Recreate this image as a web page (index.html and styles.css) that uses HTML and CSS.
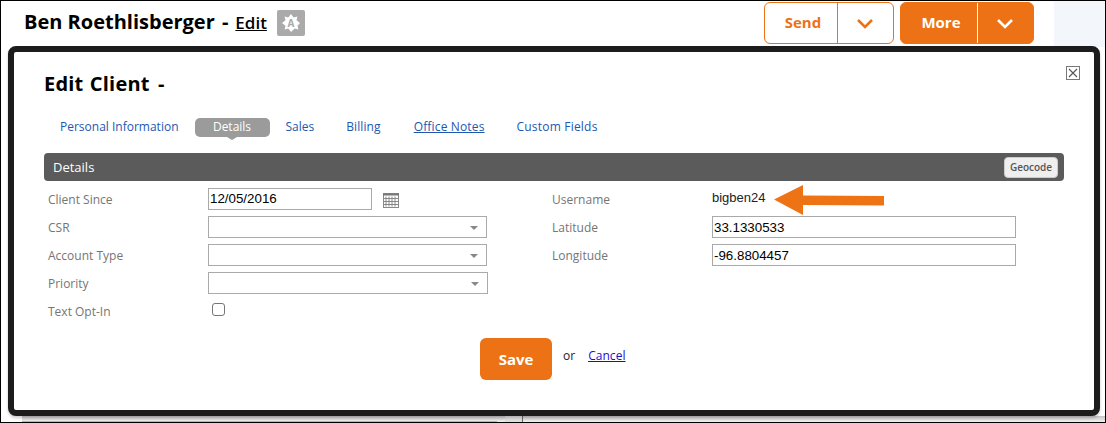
FILE: index.html
```html
<!DOCTYPE html>
<html lang="en">
<head>
<meta charset="utf-8">
<title>Edit Client</title>
<link rel="stylesheet" href="styles.css">
</head>
<body>
<div class="frame">
  <div class="under">
    <header class="top">
      <h1 class="name">Ben Roethlisberger <span class="dash">-</span></h1>
      <a class="edit" href="#">Edit</a>
      <span class="badge">
        <svg width="28" height="26" viewBox="0 0 28 26"><path d="M23 13l-2.500 2.700.9 3.700-3.700-.9L14 22l-2.700-3.500-3.700.9.9-3.700L5 13l3.500-2.700-.9-3.700 3.700.9L14 4l2.700 3.500 3.700-.9-.9 3.700z" fill="#fff"/><text x="14" y="17" class="badge-a">A</text></svg>
      </span>
      <div class="actions">
        <div class="split split-outline">
          <span class="split-label">Send</span>
          <span class="split-arrow"><svg width="18" height="11" viewBox="0 0 18 11"><path d="M2 2l7 7 7-7" class="chev"/></svg></span>
        </div>
        <div class="split split-solid">
          <span class="split-label">More</span>
          <span class="split-arrow"><svg width="18" height="11" viewBox="0 0 18 11"><path d="M2 2l7 7 7-7" class="chev"/></svg></span>
        </div>
      </div>
      <div class="side"></div>
    </header>
    <div class="strip">
      <span class="strip-a"></span>
      <span class="strip-b"></span>
      <span class="strip-c"></span>
    </div>
  </div>

  <section class="modal">
    <svg class="close" width="14" height="14" viewBox="0 0 14 14"><rect x=".5" y=".5" width="13" height="13" fill="#fff" stroke="#777"/><path d="M3 3l8 8M11 3l-8 8" stroke="#555" stroke-width="1.100"/></svg>
    <h2 class="title">Edit Client <span class="dash">-</span></h2>
    <nav class="tabs">
      <a class="tab tab-first" href="#">Personal Information</a>
      <a class="tab tab-active" href="#">Details</a>
      <a class="tab tab-sales" href="#">Sales</a>
      <a class="tab tab-billing" href="#">Billing</a>
      <a class="tab tab-notes" href="#">Office Notes</a>
      <a class="tab tab-custom" href="#">Custom Fields</a>
    </nav>
    <div class="bar">
      <span>Details</span>
      <button class="geocode" type="button">Geocode</button>
    </div>
    <div class="form">
      <div class="col col-left">
        <div class="row"><label>Client Since</label><input class="field date" value="12/05/2016">
          <svg class="cal" width="16" height="15" viewBox="0 0 16 15"><rect x=".5" y=".5" width="15" height="14" fill="#fff" stroke="#888"/><path d="M0 1.500h16" stroke="#777" stroke-width="2"/><path d="M3 3.500v10M6 3.500v10M9 3.500v10M12 3.500v10M1 5.500h14M1 8.500h14M1 11.500h14" stroke="#888"/></svg>
        </div>
        <div class="row"><label>CSR</label><div class="select"><i class="caret"></i></div></div>
        <div class="row"><label>Account Type</label><div class="select"><i class="caret"></i></div></div>
        <div class="row"><label>Priority</label><div class="select select-wide"><i class="caret"></i></div></div>
        <div class="row"><label>Text Opt-In</label><span class="check"></span></div>
      </div>
      <div class="col col-right">
        <div class="row"><label>Username</label><span class="value">bigben24</span>
          <svg class="arrow" width="111" height="30" viewBox="0 0 111 30"><path d="M0 14.500L29 0v10.500l81 .5v9.500l-81-.5V30z" fill="#ee7314"/></svg>
        </div>
        <div class="row"><label>Latitude</label><input class="field wide" value="33.1330533"></div>
        <div class="row"><label>Longitude</label><input class="field wide" value="-96.8804457"></div>
      </div>
    </div>
    <div class="submit">
      <button class="save" type="button">Save</button>
      <span class="or">or</span>
      <a class="cancel" href="#">Cancel</a>
    </div>
  </section>
</div>
</body>
</html>
```
FILE: styles.css
```css
* { box-sizing: border-box; }
html, body { margin: 0; height: 100%; overflow: hidden; background: #fff; }
body { font-family: "Open Sans", "Noto Sans", sans-serif; color: #000; }

.frame {
  position: relative;
  width: 1106px;
  height: 423px;
  border: 1px solid #000;
  overflow: hidden;
  background: #fff;
}
.under { height: 100%; display: flex; flex-direction: column; justify-content: space-between; }

.top {
  display: flex;
  align-items: flex-start;
  height: 46px;
  padding-left: 23px;
}
.name { margin: 7px 0 0; font-size: 20px; line-height: 28px; font-weight: 700; }
.dash { margin-left: 2px; }
.edit { margin: 9px 0 0 7px; font-size: 17px; line-height: 26px; font-weight: 600; color: #000; }
.badge {
  margin: 9px 0 0 10px;
  width: 28px; height: 26px;
  border-radius: 2px;
  background: #aaa;
  display: block;
}
.badge svg { display: block; }
.badge-a { font: 700 10px "Open Sans", sans-serif; fill: #aaa; text-anchor: middle; }

.actions { display: flex; gap: 6px; margin: 1px 0 0 auto; }
.side { width: 51px; height: 46px; margin-left: 20px; background: #f3f7fb; }
.split {
  display: flex;
  width: 130px; height: 42px;
  border-radius: 6px;
  border: 1px solid #ec7215;
  font-size: 15px; font-weight: 700;
  line-height: 38px;
}
.split-solid { width: 134px; background: #ec7215; color: #fff; }
.split-outline { color: #ec7215; background: #fff; }
.split-label { width: 72px; padding-left: 4px; text-align: center; }
.split-solid .split-label { width: 76px; }
.split-arrow {
  flex: 1;
  border-left: 1px solid currentColor;
  display: flex; align-items: center; justify-content: center;
}
.split-arrow svg { display: block; margin-left: -1px; }
.chev { fill: none; stroke: currentColor; stroke-width: 2.600; }

.strip {
  position: relative;
  height: 6px;
  margin-left: 21px;
  background: linear-gradient(#c4c4c4, #f2f2f2);
}
.strip-a { position: absolute; left: 0; bottom: 0; width: 475px; height: 1px; background: #b5b5b5; }
.strip-b { position: absolute; left: 483px; top: 0; width: 17px; height: 6px; background: #dedede; }
.strip-c { position: absolute; left: 500px; top: 0; width: 1px; height: 6px; background: #666; }

.modal {
  position: absolute;
  left: 7px; top: 45px;
  width: 1092px; height: 370px;
  background: #fff;
  border: 6px solid #1c1c1c;
  border-radius: 8px;
  box-shadow: 0 2px 3px rgba(0,0,0,.2);
  padding: 0 30px;
}
.close { position: absolute; right: 14px; top: 14px; display: block; }
.title { margin: 18px 0 0; font-size: 20px; line-height: 28px; font-weight: 700; letter-spacing: .2px; word-spacing: 1px; }

.tabs { display: flex; height: 18px; margin-top: 20px; font-size: 12px; line-height: 18px; align-items: center; }
.tab { color: #1d57b0; text-decoration: none; white-space: nowrap; }
.tab-first { margin-left: 16px; }
.tab-active {
  position: relative;
  width: 75px; height: 19px;
  margin-left: 16px;
  background: #9b9b9b;
  color: #fff;
  border-radius: 5px;
  text-align: center;
}
.tab-active::after {
  content: "";
  position: absolute;
  left: 32px; top: 19px;
  border: 5px solid transparent;
  border-top: 3px solid #9b9b9b;
  border-bottom: 0;
}
.tab-sales { margin-left: 16px; }
.tab-billing { margin-left: 32px; letter-spacing: .1px; }
.tab-notes { margin-left: 33px; text-decoration: underline; letter-spacing: .15px; }
.tab-custom { margin-left: 32px; letter-spacing: .2px; }

.bar {
  display: flex; align-items: center; justify-content: space-between;
  height: 28px;
  margin-top: 17px;
  padding: 0 6px 0 9px;
  background: #5b5b5b;
  color: #fff;
  border-radius: 4px;
  font-size: 13px;
  font-weight: 500;
}
.geocode {
  width: 54px; height: 21px; padding: 0;
  border: 1px solid #ccc;
  border-radius: 4px;
  background: #efefef;
  color: #555;
  font: 600 10px "Open Sans", sans-serif;
}

.form { display: flex; padding-left: 4px; margin-top: 4px; }
.col-left { width: 504px; }
.row { display: flex; align-items: flex-start; height: 28px; position: relative; }
.row label { flex: none; font-size: 12px; line-height: 22px; padding-top: 4px; color: #757575; }
.col-left label { width: 160px; }
.col-right label { width: 160px; }
.field {
  height: 22px; padding: 0 1px;
  border: 1px solid #a9a9a9;
  background: #fff;
  font: 13.330px "Liberation Sans", Arial, sans-serif;
  color: #000;
  outline: 0;
  margin-top: 3px;
}
.date { width: 164px; padding-bottom: 2px; }
.wide { width: 304px; }
.cal { margin: 8px 0 0 11px; }
.select {
  position: relative;
  width: 279px; height: 22px;
  margin-top: 3px;
  border: 1px solid #aaa;
  background: #fff;
}
.select-wide { width: 280px; }
.caret {
  position: absolute;
  right: 8px; top: 9px;
  border: 4px solid transparent;
  border-top: 4px solid #888;
  border-bottom: 0;
}
.check {
  width: 13px; height: 13px;
  margin: 6px 0 0 4px;
  border: 1px solid #767676;
  border-radius: 3px;
  background: #fff;
}
.value { font: 13px/20px "Liberation Sans", Arial, sans-serif; color: #222; margin-top: 3px; }
.arrow { position: absolute; left: 222px; top: 0; }

.submit { display: flex; align-items: flex-start; margin: 13px 0 0 436px; }
.save {
  width: 72px; height: 42px; padding: 0;
  border: 0; border-radius: 6px;
  background: #ec7215; color: #fff;
  font: 700 15px "Open Sans", sans-serif;
}
.or { margin: 8px 0 0 11px; font-size: 12px; line-height: 20px; color: #222; }
.cancel { margin: 8px 0 0 13px; font-size: 12px; line-height: 20px; color: #1a0dcc; letter-spacing: .05px; }
```
